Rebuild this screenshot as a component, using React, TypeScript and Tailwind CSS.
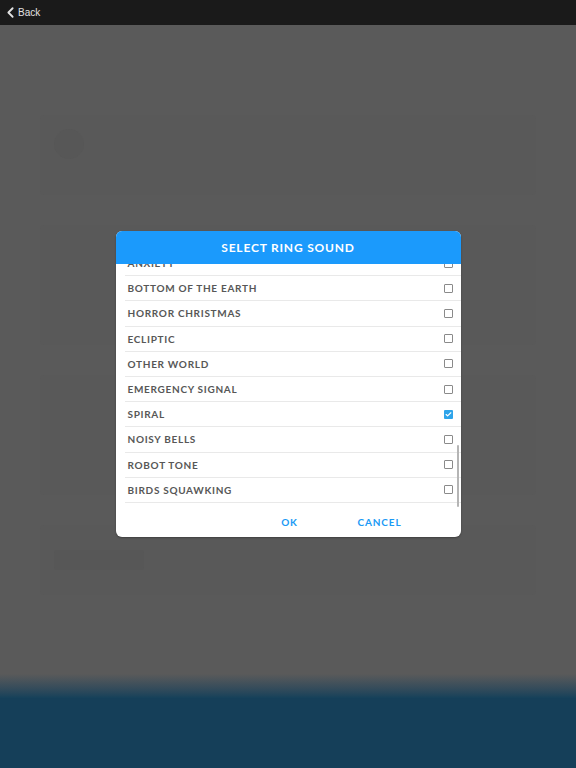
import { ChevronLeft, Check } from 'lucide-react';

const sounds = [
  'Anxiety',
  'Bottom of the Earth',
  'Horror Christmas',
  'Ecliptic',
  'Other World',
  'Emergency Signal',
  'Spiral',
  'Noisy Bells',
  'Robot Tone',
  'Birds Squawking',
];

const selected = 'Spiral';

function SoundRow({ name }: { name: string }) {
  const checked = name === selected;
  return (
    <div className="flex items-center h-[25.2px] ml-[9px] pl-[3px] pr-[8px] border-b border-[#e9e9e9]">
      <span className="flex-1 pt-[1px] text-[10px] font-bold tracking-[0.7px] text-[#575757] uppercase">{name}</span>
      {checked ? (
        <span className="w-[9px] h-[9px] rounded-[1px] bg-[#2ea4ea] flex items-center justify-center">
          <Check className="w-[7px] h-[7px] text-white" strokeWidth={4} />
        </span>
      ) : (
        <span className="w-[9px] h-[9px] rounded-[1px] border border-[#8a8a8a] bg-white" />
      )}
    </div>
  );
}

export default function App() {
  return (
    <div className="relative w-[576px] h-[768px] overflow-hidden flex flex-col bg-[#5a5a5a] font-['Lato',sans-serif]">
      {/* Top bar */}
      <div className="h-[25px] bg-[#1a1a1a] flex items-center pl-[2px] text-[#e2e2e2]">
        <ChevronLeft className="w-[17px] h-[17px]" strokeWidth={2.6} />
        <span className="text-[10px] -ml-[1px] font-['Liberation_Sans',sans-serif]">Back</span>
      </div>

      {/* Dimmed page behind */}
      <div className="flex-1 flex flex-col">
        <div className="flex-1 px-[40px] pt-[90px] flex flex-col gap-[30px]">
          <div className="h-[80px] rounded-[4px] bg-[#595959] flex items-start gap-[12px] p-[14px]">
            <div className="w-[30px] h-[30px] rounded-full bg-[#575757]" />
          </div>
          <div className="h-[120px] rounded-[4px] bg-[#595959]" />
          <div className="h-[120px] rounded-[4px] bg-[#595959]" />
          <div className="h-[70px] rounded-[4px] bg-[#595959] flex items-center gap-[10px] px-[14px]">
            <div className="w-[90px] h-[20px] rounded-[3px] bg-[#575757]" />
          </div>
        </div>
        <div className="h-[24px] bg-gradient-to-b from-[#5a5a5a] to-[#15415a]" />
        <div className="h-[70px] bg-[#153f59]" />
      </div>

      {/* Modal */}
      <div className="absolute inset-0 flex items-center justify-center">
        <div className="w-[345px] h-[306px] bg-white rounded-[6px] overflow-hidden flex flex-col shadow-[0_1px_2px_rgba(0,0,0,0.3)]">
          <div className="h-[33px] bg-[#1b9afc] flex items-center justify-center shrink-0">
            <span className="text-white text-[12px] font-bold tracking-[0.8px] uppercase">Select Ring Sound</span>
          </div>
          <div className="relative h-[243px] overflow-hidden">
            <div className="-mt-[13px]">
              {sounds.map((s) => (
                <SoundRow key={s} name={s} />
              ))}
            </div>
            <div className="absolute right-[2px] top-[181px] w-[2px] h-[62px] rounded-full bg-[#b5b5b5]" />
          </div>
          <div className="flex-1 flex items-center justify-end pr-[36px] pt-[1px]">
            <button className="w-[90px] text-center text-[10px] font-bold tracking-[0.9px] text-[#1b9af5]">OK</button>
            <button className="w-[90px] text-center text-[10px] font-bold tracking-[0.9px] text-[#1b9af5]">CANCEL</button>
          </div>
        </div>
      </div>
    </div>
  );
}
